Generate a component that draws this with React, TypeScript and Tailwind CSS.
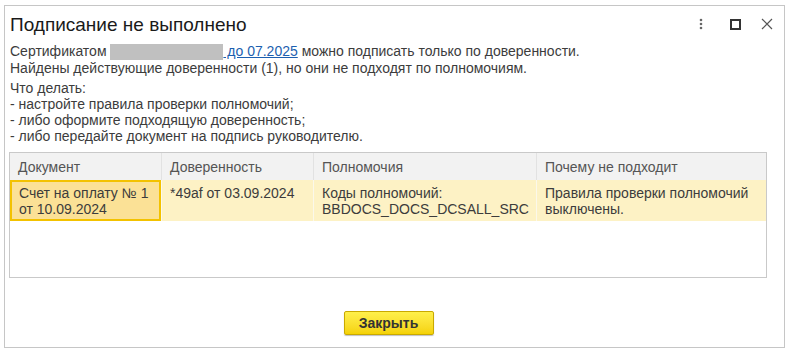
const columns = [
  { title: "Документ", width: "w-[151px]" },
  { title: "Доверенность", width: "w-[152px]" },
  { title: "Полномочия", width: "w-[223px]" },
  { title: "Почему не подходит", width: "flex-1" },
];

const DotsIcon = () => (
  <svg width="4" height="12" viewBox="0 0 4 12">
    <circle cx="2" cy="2" r="1.3" fill="#666" />
    <circle cx="2" cy="6" r="1.3" fill="#666" />
    <circle cx="2" cy="10" r="1.3" fill="#666" />
  </svg>
);

const MaximizeIcon = () => (
  <svg width="11" height="11" viewBox="0 0 11 11">
    <rect x="1" y="1" width="9" height="9" fill="none" stroke="#333" strokeWidth="2" />
  </svg>
);

const CloseIcon = () => (
  <svg width="12" height="12" viewBox="0 0 12 12">
    <path d="M1 1L11 11M11 1L1 11" stroke="#555" strokeWidth="1.2" />
  </svg>
);

const App = () => {
  return (
    <div className="w-[795px] h-[354px] bg-white pt-[5px] pl-[4px] font-['Liberation_Sans',Arial,sans-serif]">
      <div className="w-[781px] h-[343px] border border-[#c6c6c6] flex flex-col bg-white">
        {/* title */}
        <div className="flex items-center h-[35px] pl-[5px] pr-[11px] pt-[1px]">
          <h1 className="text-[19px] text-[#1a1a1a] flex-1 leading-none">
            Подписание не выполнено
          </h1>
          <div className="flex items-center gap-[20px]">
            <DotsIcon />
            <span className="ml-[7px]">
              <MaximizeIcon />
            </span>
            <CloseIcon />
          </div>
        </div>

        {/* message */}
        <div className="pl-[5px] text-[14px] leading-[16px] text-[#3c3c3c] mt-[2px]">
          <p>
            Сертификатом{" "}
            <a href="#" className="text-[#1c5fb0] underline decoration-[#1c5fb0]">
              <span className="inline-block w-[113px] h-[16px] align-[-4px] bg-[#c0c0c0]" /> до 07.2025
            </a>{" "}
            можно подписать только по доверенности.
          </p>
          <p>Найдены действующие доверенности (1), но они не подходят по полномочиям.</p>
          <p className="mt-[4px]">Что делать:</p>
          <div>
            <p>- настройте правила проверки полномочий;</p>
            <p>- либо оформите подходящую доверенность;</p>
            <p>- либо передайте документ на подпись руководителю.</p>
          </div>
        </div>

        {/* table */}
        <div className="ml-[4px] mt-[8px] w-[758px] h-[126px] border border-[#c9c9c9] flex flex-col text-[14px] leading-[16px]">
          <div className="flex h-[27px] bg-[#f2f2f2] text-[#555]">
            {columns.map((c, i) => (
              <div
                key={c.title}
                className={`${c.width} flex items-center pl-[8px] ${i > 0 ? "border-l border-[#e2e2e2]" : ""}`}
              >
                {c.title}
              </div>
            ))}
          </div>
          <div className="flex h-[41px] bg-[#fdf2c5] text-[#3c3c3c]">
            <div className="w-[151px] bg-[#fbe196] border-2 border-[#f3c200] pl-[7px] pt-[3px]">
              Счет на оплату № 1
              <br />
              от 10.09.2024
            </div>
            <div className="w-[152px] pl-[8px] pt-[5px] border-l border-[#fbf8ea]">*49af от 03.09.2024</div>
            <div className="w-[223px] pl-[8px] pt-[5px] border-l border-[#fbf8ea]">
              Коды полномочий:
              <br />
              BBDOCS_DOCS_DCSALL_SRC
            </div>
            <div className="flex-1 pl-[8px] pt-[5px] border-l border-[#fbf8ea]">
              Правила проверки полномочий
              <br />
              выключены.
            </div>
          </div>
          <div className="flex-1 bg-white" />
        </div>

        {/* footer */}
        <div className="flex-1 flex items-start justify-center pr-[12px] pt-[33px]">
          <button className="w-[90px] h-[24px] rounded-[2px] border border-[#c9a900] bg-gradient-to-b from-[#fff04a] to-[#f5d200] text-[14px] font-bold text-[#333] shadow-[0_1px_1px_rgba(0,0,0,0.25)]">
            Закрыть
          </button>
        </div>
      </div>
    </div>
  );
};

export default App;
